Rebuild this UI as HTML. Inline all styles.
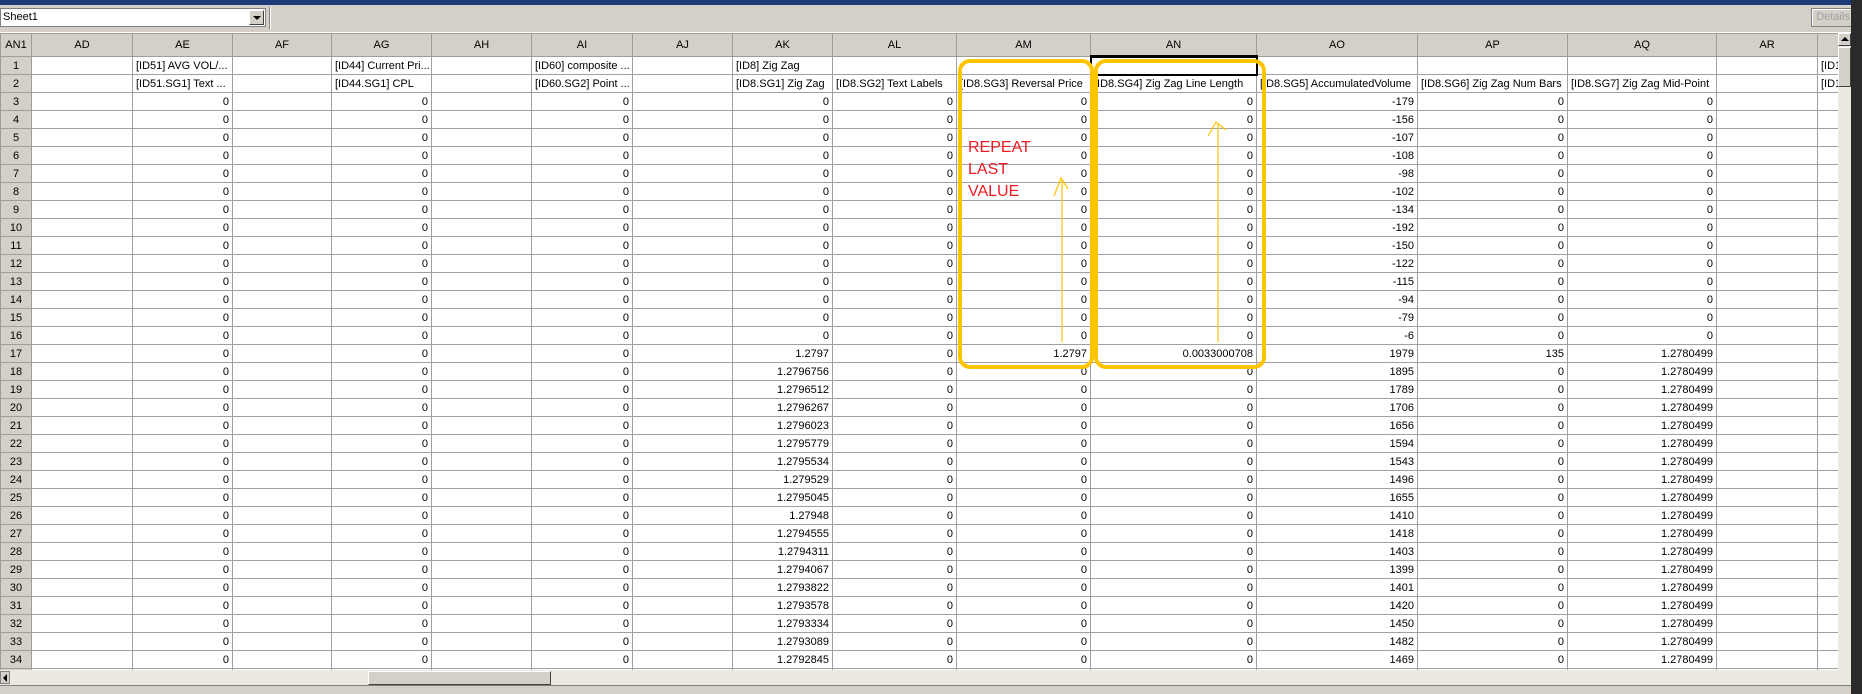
<!DOCTYPE html>
<html><head><meta charset="utf-8"><style>
*{margin:0;padding:0;box-sizing:border-box}
body{width:1862px;height:694px;overflow:hidden;background:#d4d0c8;font-family:"Liberation Sans",Arial,sans-serif;font-size:11px;color:#000;position:relative}
#top{position:absolute;left:0;top:0;width:1862px;height:5px;background:#1c3a7a}
#bar{position:absolute;left:0;top:5px;width:1862px;height:28px;background:#d4d0c8;border-bottom:1px solid #fff}
#sel{position:absolute;left:0;top:3px;width:266px;height:19px;background:#fff;border:1px solid #808080;padding:2px 2px;font-size:11px}
#sel .dd{position:absolute;right:1px;top:1px;width:15px;height:15px;background:#d4d0c8;border:1px solid;border-color:#fff #404040 #404040 #fff}
#sel .dd:after{content:"";position:absolute;left:3px;top:5px;border-left:4px solid transparent;border-right:4px solid transparent;border-top:4px solid #000}
#sep{position:absolute;left:269px;top:2px;width:2px;height:22px;border-left:1px solid #808080;border-right:1px solid #fff}
#det{position:absolute;left:1811px;top:3px;width:44px;height:19px;border:1px solid #808080;color:#a0a0a0;text-align:center;line-height:16px;background:#d4d0c8;box-shadow:inset 1px 1px #fff}
#grid{position:absolute;left:0;top:33px;width:1838px;height:637px;overflow:hidden;background:#fff}
table{border-collapse:collapse;table-layout:fixed;width:1838px}
td,th{border:1px solid #a0a0a0;height:18px;padding:0 3px;white-space:nowrap;overflow:hidden;font-weight:normal;line-height:16px}
thead th{background:#d4d0c8;height:23px;text-align:center;border-color:#a09e94}
tbody th{background:#d4d0c8;text-align:center;border-color:#a09e94;padding:0}
td{text-align:right}
tr.l td{text-align:left}
#vs{position:absolute;left:1838px;top:33px;width:13px;height:637px;background:#ece9e2}
#vs .b{position:absolute;left:0;top:0;width:13px;height:13px;background:#d4d0c8;border:1px solid;border-color:#fff #404040 #404040 #fff}
#vs .b:after{content:"";position:absolute;left:2px;top:3px;border-left:4px solid transparent;border-right:4px solid transparent;border-bottom:4px solid #000}
#vs .t{position:absolute;left:0;top:14px;width:13px;height:40px;background:#d4d0c8;border:1px solid;border-color:#fff #404040 #404040 #fff}
#rs{position:absolute;left:1851px;top:0;width:11px;height:694px;background:#2a2a2a}
#hs{position:absolute;left:0;top:670px;width:1851px;height:15px;background:#ece9e2}
#hs .b{position:absolute;left:0;top:1px;width:10px;height:13px;background:#d4d0c8;border:1px solid #808080}
#hs .b:after{content:"";position:absolute;left:2px;top:2px;border-top:4px solid transparent;border-bottom:4px solid transparent;border-right:4px solid #000}
#hs .t{position:absolute;left:368px;top:1px;width:183px;height:14px;background:#d4d0c8;border:1px solid;border-color:#fff #404040 #404040 #fff}
#bot{position:absolute;left:0;top:685px;width:1851px;height:9px;background:#d4d0c8;border-top:1px solid #808080}
.box{position:absolute;border:4px solid #ffc400;border-radius:12px}
#rt{position:absolute;left:968px;top:137px;color:#ee1b24;font-size:16px;line-height:22px}
</style></head><body>
<div id="top"></div>
<div id="bar"><div id="sel">Sheet1<div class="dd"></div></div><div id="sep"></div><div id="det">Details</div></div>
<div id="grid"><table>
<colgroup><col style="width:31px"><col style="width:101px"><col style="width:100px"><col style="width:99px"><col style="width:100px"><col style="width:100px"><col style="width:101px"><col style="width:100px"><col style="width:100px"><col style="width:124px"><col style="width:134px"><col style="width:166px"><col style="width:161px"><col style="width:150px"><col style="width:149px"><col style="width:101px"><col style="width:21px"></colgroup>
<thead><tr><th>AN1</th><th>AD</th><th>AE</th><th>AF</th><th>AG</th><th>AH</th><th>AI</th><th>AJ</th><th>AK</th><th>AL</th><th>AM</th><th style="border-bottom:3px solid #000">AN</th><th>AO</th><th>AP</th><th>AQ</th><th>AR</th><th></th></tr></thead>
<tbody>
<tr class="l"><th>1</th><td></td><td>[ID51] AVG VOL/...</td><td></td><td>[ID44] Current Pri...</td><td></td><td>[ID60] composite ...</td><td></td><td>[ID8] Zig Zag</td><td></td><td></td><td style="border:2px solid #000"></td><td></td><td></td><td></td><td></td><td>[ID1</td></tr>
<tr class="l"><th>2</th><td></td><td>[ID51.SG1] Text ...</td><td></td><td>[ID44.SG1] CPL</td><td></td><td>[ID60.SG2] Point ...</td><td></td><td>[ID8.SG1] Zig Zag</td><td>[ID8.SG2] Text Labels</td><td>[ID8.SG3] Reversal Price</td><td>[ID8.SG4] Zig Zag Line Length</td><td>[ID8.SG5] AccumulatedVolume</td><td>[ID8.SG6] Zig Zag Num Bars</td><td>[ID8.SG7] Zig Zag Mid-Point</td><td></td><td>[ID1</td></tr>
<tr><th>3</th><td></td><td>0</td><td></td><td>0</td><td></td><td>0</td><td></td><td>0</td><td>0</td><td>0</td><td>0</td><td>-179</td><td>0</td><td>0</td><td></td><td></td></tr>
<tr><th>4</th><td></td><td>0</td><td></td><td>0</td><td></td><td>0</td><td></td><td>0</td><td>0</td><td>0</td><td>0</td><td>-156</td><td>0</td><td>0</td><td></td><td></td></tr>
<tr><th>5</th><td></td><td>0</td><td></td><td>0</td><td></td><td>0</td><td></td><td>0</td><td>0</td><td>0</td><td>0</td><td>-107</td><td>0</td><td>0</td><td></td><td></td></tr>
<tr><th>6</th><td></td><td>0</td><td></td><td>0</td><td></td><td>0</td><td></td><td>0</td><td>0</td><td>0</td><td>0</td><td>-108</td><td>0</td><td>0</td><td></td><td></td></tr>
<tr><th>7</th><td></td><td>0</td><td></td><td>0</td><td></td><td>0</td><td></td><td>0</td><td>0</td><td>0</td><td>0</td><td>-98</td><td>0</td><td>0</td><td></td><td></td></tr>
<tr><th>8</th><td></td><td>0</td><td></td><td>0</td><td></td><td>0</td><td></td><td>0</td><td>0</td><td>0</td><td>0</td><td>-102</td><td>0</td><td>0</td><td></td><td></td></tr>
<tr><th>9</th><td></td><td>0</td><td></td><td>0</td><td></td><td>0</td><td></td><td>0</td><td>0</td><td>0</td><td>0</td><td>-134</td><td>0</td><td>0</td><td></td><td></td></tr>
<tr><th>10</th><td></td><td>0</td><td></td><td>0</td><td></td><td>0</td><td></td><td>0</td><td>0</td><td>0</td><td>0</td><td>-192</td><td>0</td><td>0</td><td></td><td></td></tr>
<tr><th>11</th><td></td><td>0</td><td></td><td>0</td><td></td><td>0</td><td></td><td>0</td><td>0</td><td>0</td><td>0</td><td>-150</td><td>0</td><td>0</td><td></td><td></td></tr>
<tr><th>12</th><td></td><td>0</td><td></td><td>0</td><td></td><td>0</td><td></td><td>0</td><td>0</td><td>0</td><td>0</td><td>-122</td><td>0</td><td>0</td><td></td><td></td></tr>
<tr><th>13</th><td></td><td>0</td><td></td><td>0</td><td></td><td>0</td><td></td><td>0</td><td>0</td><td>0</td><td>0</td><td>-115</td><td>0</td><td>0</td><td></td><td></td></tr>
<tr><th>14</th><td></td><td>0</td><td></td><td>0</td><td></td><td>0</td><td></td><td>0</td><td>0</td><td>0</td><td>0</td><td>-94</td><td>0</td><td>0</td><td></td><td></td></tr>
<tr><th>15</th><td></td><td>0</td><td></td><td>0</td><td></td><td>0</td><td></td><td>0</td><td>0</td><td>0</td><td>0</td><td>-79</td><td>0</td><td>0</td><td></td><td></td></tr>
<tr><th>16</th><td></td><td>0</td><td></td><td>0</td><td></td><td>0</td><td></td><td>0</td><td>0</td><td>0</td><td>0</td><td>-6</td><td>0</td><td>0</td><td></td><td></td></tr>
<tr><th>17</th><td></td><td>0</td><td></td><td>0</td><td></td><td>0</td><td></td><td>1.2797</td><td>0</td><td>1.2797</td><td>0.0033000708</td><td>1979</td><td>135</td><td>1.2780499</td><td></td><td></td></tr>
<tr><th>18</th><td></td><td>0</td><td></td><td>0</td><td></td><td>0</td><td></td><td>1.2796756</td><td>0</td><td>0</td><td>0</td><td>1895</td><td>0</td><td>1.2780499</td><td></td><td></td></tr>
<tr><th>19</th><td></td><td>0</td><td></td><td>0</td><td></td><td>0</td><td></td><td>1.2796512</td><td>0</td><td>0</td><td>0</td><td>1789</td><td>0</td><td>1.2780499</td><td></td><td></td></tr>
<tr><th>20</th><td></td><td>0</td><td></td><td>0</td><td></td><td>0</td><td></td><td>1.2796267</td><td>0</td><td>0</td><td>0</td><td>1706</td><td>0</td><td>1.2780499</td><td></td><td></td></tr>
<tr><th>21</th><td></td><td>0</td><td></td><td>0</td><td></td><td>0</td><td></td><td>1.2796023</td><td>0</td><td>0</td><td>0</td><td>1656</td><td>0</td><td>1.2780499</td><td></td><td></td></tr>
<tr><th>22</th><td></td><td>0</td><td></td><td>0</td><td></td><td>0</td><td></td><td>1.2795779</td><td>0</td><td>0</td><td>0</td><td>1594</td><td>0</td><td>1.2780499</td><td></td><td></td></tr>
<tr><th>23</th><td></td><td>0</td><td></td><td>0</td><td></td><td>0</td><td></td><td>1.2795534</td><td>0</td><td>0</td><td>0</td><td>1543</td><td>0</td><td>1.2780499</td><td></td><td></td></tr>
<tr><th>24</th><td></td><td>0</td><td></td><td>0</td><td></td><td>0</td><td></td><td>1.279529</td><td>0</td><td>0</td><td>0</td><td>1496</td><td>0</td><td>1.2780499</td><td></td><td></td></tr>
<tr><th>25</th><td></td><td>0</td><td></td><td>0</td><td></td><td>0</td><td></td><td>1.2795045</td><td>0</td><td>0</td><td>0</td><td>1655</td><td>0</td><td>1.2780499</td><td></td><td></td></tr>
<tr><th>26</th><td></td><td>0</td><td></td><td>0</td><td></td><td>0</td><td></td><td>1.27948</td><td>0</td><td>0</td><td>0</td><td>1410</td><td>0</td><td>1.2780499</td><td></td><td></td></tr>
<tr><th>27</th><td></td><td>0</td><td></td><td>0</td><td></td><td>0</td><td></td><td>1.2794555</td><td>0</td><td>0</td><td>0</td><td>1418</td><td>0</td><td>1.2780499</td><td></td><td></td></tr>
<tr><th>28</th><td></td><td>0</td><td></td><td>0</td><td></td><td>0</td><td></td><td>1.2794311</td><td>0</td><td>0</td><td>0</td><td>1403</td><td>0</td><td>1.2780499</td><td></td><td></td></tr>
<tr><th>29</th><td></td><td>0</td><td></td><td>0</td><td></td><td>0</td><td></td><td>1.2794067</td><td>0</td><td>0</td><td>0</td><td>1399</td><td>0</td><td>1.2780499</td><td></td><td></td></tr>
<tr><th>30</th><td></td><td>0</td><td></td><td>0</td><td></td><td>0</td><td></td><td>1.2793822</td><td>0</td><td>0</td><td>0</td><td>1401</td><td>0</td><td>1.2780499</td><td></td><td></td></tr>
<tr><th>31</th><td></td><td>0</td><td></td><td>0</td><td></td><td>0</td><td></td><td>1.2793578</td><td>0</td><td>0</td><td>0</td><td>1420</td><td>0</td><td>1.2780499</td><td></td><td></td></tr>
<tr><th>32</th><td></td><td>0</td><td></td><td>0</td><td></td><td>0</td><td></td><td>1.2793334</td><td>0</td><td>0</td><td>0</td><td>1450</td><td>0</td><td>1.2780499</td><td></td><td></td></tr>
<tr><th>33</th><td></td><td>0</td><td></td><td>0</td><td></td><td>0</td><td></td><td>1.2793089</td><td>0</td><td>0</td><td>0</td><td>1482</td><td>0</td><td>1.2780499</td><td></td><td></td></tr>
<tr><th>34</th><td></td><td>0</td><td></td><td>0</td><td></td><td>0</td><td></td><td>1.2792845</td><td>0</td><td>0</td><td>0</td><td>1469</td><td>0</td><td>1.2780499</td><td></td><td></td></tr>
<tr><th>35</th><td></td><td>0</td><td></td><td>0</td><td></td><td>0</td><td></td><td>1.2792601</td><td>0</td><td>0</td><td>0</td><td>1460</td><td>0</td><td>1.2780499</td><td></td><td></td></tr>
</tbody></table></div>
<div class="box" style="left:958px;top:59px;width:136px;height:310px"></div>
<div class="box" style="left:1094px;top:59px;width:172px;height:310px"></div>
<div id="rt">REPEAT<br>LAST<br>VALUE</div>
<svg style="position:absolute;left:0;top:0" width="1862" height="694">
<path d="M1062 342 V180 M1054 196 L1061 178 L1068 189" stroke="#ffc400" stroke-width="1.2" fill="none"/>
<path d="M1218 342 V124 M1208 136 L1216 122 L1226 130" stroke="#ffc400" stroke-width="1.2" fill="none"/>
</svg>
<div id="vs"><div class="b"></div><div class="t"></div></div>
<div id="hs"><div class="b"></div><div class="t"></div></div>
<div id="bot"></div>
<div id="rs"></div>
</body></html>
